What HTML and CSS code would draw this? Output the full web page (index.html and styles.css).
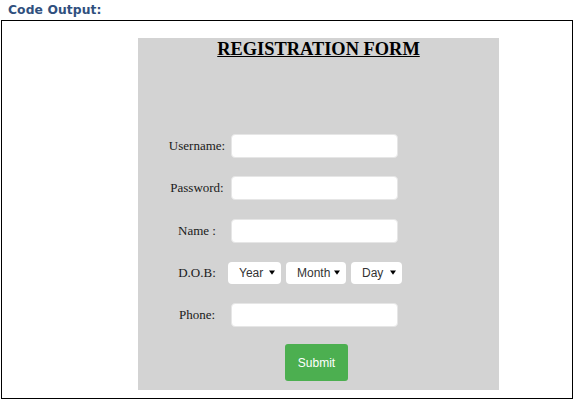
FILE: index.html
```html
<!DOCTYPE html>
<html>
<head>
<meta charset="utf-8">
<title>Code Output</title>
<link rel="stylesheet" href="styles.css">
</head>
<body>
<div class="heading">Code Output:</div>
<div class="frame">
  <form class="panel">
    <h1 class="title">REGISTRATION FORM</h1>
    <div class="rows">
      <div class="row">
        <label class="lbl">Username:</label>
        <div class="ctl"><input class="field" type="text"></div>
      </div>
      <div class="row">
        <label class="lbl">Password:</label>
        <div class="ctl"><input class="field" type="password"></div>
      </div>
      <div class="row">
        <label class="lbl">Name :</label>
        <div class="ctl"><input class="field" type="text"></div>
      </div>
      <div class="row">
        <label class="lbl">D.O.B:</label>
        <div class="ctl selects">
          <div class="sel sel-year"><span>Year</span><svg class="arrow" width="6" height="5" viewBox="0 0 6 5"><path d="M0 0.5H6L3 4.8Z" fill="#000"/></svg></div>
          <div class="sel sel-month"><span>Month</span><svg class="arrow" width="6" height="5" viewBox="0 0 6 5"><path d="M0 0.5H6L3 4.8Z" fill="#000"/></svg></div>
          <div class="sel sel-day"><span>Day</span><svg class="arrow" width="6" height="5" viewBox="0 0 6 5"><path d="M0 0.5H6L3 4.8Z" fill="#000"/></svg></div>
        </div>
      </div>
      <div class="row">
        <label class="lbl">Phone:</label>
        <div class="ctl"><input class="field" type="text"></div>
      </div>
    </div>
    <div class="submit-row"><button class="submit" type="button">Submit</button></div>
  </form>
</div>
</body>
</html>
```
FILE: styles.css
```css
html, body {
  margin: 0;
  padding: 0;
  background: #fff;
}
.heading {
  height: 20px;
  padding-left: 8px;
  font-family: "DejaVu Sans", Verdana, sans-serif;
  font-weight: bold;
  font-size: 12.3px;
  line-height: 20px;
  color: #30507e;
  letter-spacing: 0.1px;
}
.frame {
  box-sizing: border-box;
  margin-left: 1px;
  width: 572px;
  height: 379px;
  border: 1px solid #000;
  padding-top: 17px;
  padding-left: 136px;
}
.panel {
  box-sizing: border-box;
  width: 361px;
  height: 352px;
  background: #d3d3d3;
  margin: 0;
  font-family: "Liberation Serif", "Times New Roman", serif;
}
.title {
  margin: 0;
  text-align: center;
  font-size: 18.4px;
  line-height: 22px;
  font-weight: bold;
  text-decoration: underline;
  color: #000;
}
.rows {
  padding-top: 74px;
  display: flex;
  flex-direction: column;
  gap: 18.25px;
}
.row {
  display: flex;
  align-items: center;
  height: 24px;
}
.lbl {
  margin-left: 28px;
  width: 62px;
  text-align: center;
  font-size: 13px;
  color: #1a1a1a;
}
.ctl {
  display: flex;
  align-items: center;
}
.field {
  box-sizing: border-box;
  margin-left: 3px;
  width: 167px;
  height: 24px;
  border: 1px solid #e6e6e6;
  border-radius: 4px;
  background: #fff;
  padding: 0 6px;
}
.selects {
  gap: 5px;
}
.sel {
  box-sizing: border-box;
  height: 22px;
  background: #fff;
  border-radius: 4px;
  display: flex;
  align-items: center;
  justify-content: space-between;
  padding: 0 6px 0 11px;
  font-family: "Liberation Sans", Arial, sans-serif;
  font-size: 12px;
  color: #333;
}
.sel-year { width: 53px; }
.sel-month { width: 60px; }
.sel-day { width: 51px; }
.arrow {
  display: block;
}
.submit-row {
  padding-top: 17px;
  padding-left: 147px;
}
.submit {
  display: block;
  width: 63px;
  height: 37px;
  border: none;
  border-radius: 3px;
  background: #4caf50;
  color: #fff;
  font-family: "Liberation Sans", Arial, sans-serif;
  font-size: 12px;
  padding: 0;
}
```
